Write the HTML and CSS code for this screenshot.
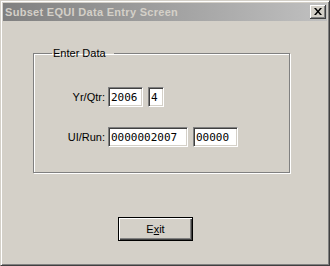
FILE: index.html
```html
<!DOCTYPE html>
<html>
<head>
    <link rel="stylesheet" href="styles.css">
</head>
<body>
    <div class="window">
        <div class="titlebar">
            <span class="title">Subset EQUI Data Entry Screen</span>
            <button class="close-btn" title="Close">
                <svg width="8" height="7" viewBox="0 0 8 7">
                    <path d="M0 0h2l2 2.5L6 0h2L5 3.5 8 7H6L4 4.5 2 7H0l3-3.5z" fill="#000"/>
                </svg>
            </button>
        </div>
        <div class="client">
            <fieldset class="group">
                <legend>Enter Data</legend>
                <div class="fields">
                    <label class="field-label">Yr/Qtr:</label>
                    <div class="inputs">
                        <input type="text" class="box box-yr" value="2006">
                        <input type="text" class="box box-qtr" value="4">
                    </div>
                    <label class="field-label">UI/Run:</label>
                    <div class="inputs">
                        <input type="text" class="box box-ui" value="0000002007">
                        <input type="text" class="box box-run" value="00000">
                    </div>
                </div>
            </fieldset>
            <button class="exit-btn">E<u>x</u>it</button>
        </div>
    </div>
</body>
</html>
```

FILE: styles.css
```css
/* Classic window colours */
:root {
    --face: #d4d0c8;
    --shadow: #808080;
    --dark: #404040;
    --light: #ffffff;
}

body {
    margin: 0;
    background: var(--face);
    font-family: "Liberation Sans", Arial, sans-serif;
    font-size: 11px;
}

.window {
    width: 330px;
    height: 266px;
    box-sizing: border-box;
    border: 1px solid;
    border-color: var(--face) var(--dark) var(--dark) var(--face);
    box-shadow: inset 1px 1px var(--light), inset -1px -1px var(--shadow);
    padding: 2px;
    background: var(--face);
}

.titlebar {
    height: 18px;
    display: flex;
    align-items: center;
    justify-content: space-between;
    padding: 0 1px 0 2px;
    background: linear-gradient(to right, #808080, #c0c0c0);
}

.title {
    color: var(--face);
    font-weight: bold;
    font-size: 11px;
    letter-spacing: 0.3px;
    line-height: 18px;
}

.close-btn {
    width: 16px;
    height: 14px;
    padding: 0;
    margin: 0;
    display: flex;
    align-items: center;
    justify-content: center;
    background: var(--face);
    border: none;
    border-right: 1px solid var(--dark);
    border-bottom: 1px solid var(--dark);
    box-shadow: inset 1px 1px var(--light), inset -1px -1px var(--shadow);
    box-sizing: border-box;
}

.close-btn svg {
    display: block;
    margin: 0 0 1px 0;
}

.client {
    display: flex;
    flex-direction: column;
    align-items: flex-start;
}

.group {
    box-sizing: border-box;
    width: 257px;
    margin: 26px 0 0 30px;
    padding: 27px 0 25px 0;
    border: 1px solid var(--shadow);
    box-shadow: inset 1px 1px var(--light), 1px 1px var(--light);
    min-width: 0;
}

.group legend {
    margin-left: 18px;
    padding: 0 8px 0 1px;
    line-height: 13px;
    color: #000;
}

.fields {
    display: grid;
    grid-template-columns: 71px auto;
    column-gap: 3px;
    row-gap: 20px;
    align-items: center;
}

.field-label {
    text-align: right;
    color: #000;
}

.inputs {
    display: flex;
    gap: 5px;
}

.box {
    box-sizing: border-box;
    height: 20px;
    margin: 0;
    padding: 0 0 0 2px;
    border: 1px solid;
    border-color: var(--shadow) var(--light) var(--light) var(--shadow);
    box-shadow: inset 1px 1px var(--dark), inset -1px -1px var(--face);
    background: #fff;
    font-family: "DejaVu Sans Mono", "Liberation Mono", monospace;
    font-size: 11px;
    color: #000;
    outline: none;
}

.box-yr { width: 35px; }
.box-qtr { width: 16px; }
.box-ui { width: 80px; }
.box-run { width: 45px; }

.exit-btn {
    box-sizing: border-box;
    width: 75px;
    height: 24px;
    margin: 44px 0 0 115px;
    padding: 0;
    background: var(--face);
    border: 1px solid #000;
    box-shadow: inset 1px 1px var(--light), inset -1px -1px var(--dark), inset -2px -2px var(--shadow);
    font-family: "Liberation Sans", Arial, sans-serif;
    font-size: 11px;
    color: #000;
}
```
